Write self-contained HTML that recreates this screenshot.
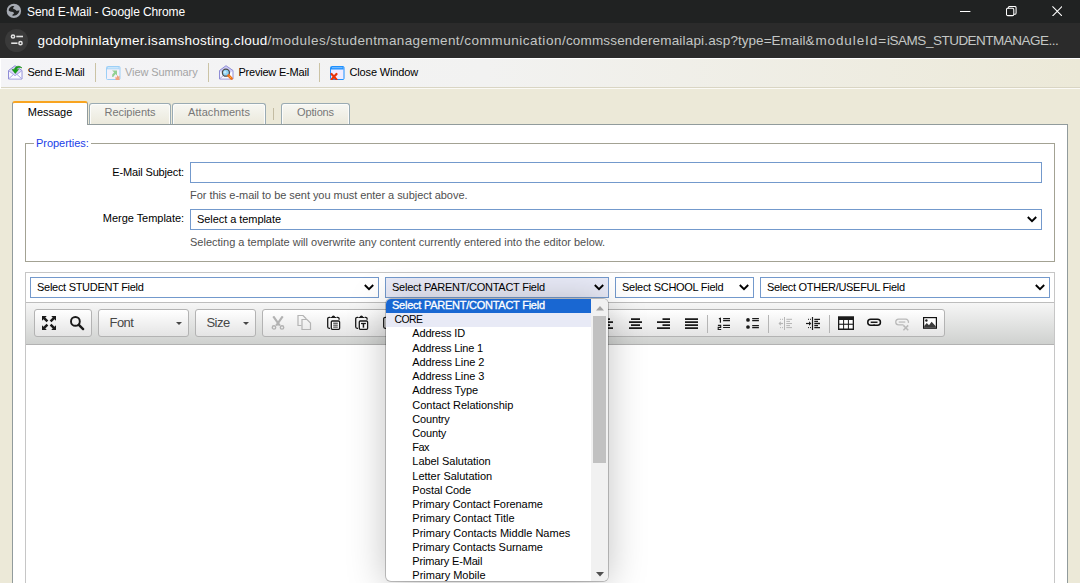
<!DOCTYPE html>
<html lang="en">
<head>
<meta charset="utf-8">
<title>Send E-Mail</title>
<style>
*{box-sizing:border-box;margin:0;padding:0}
html,body{width:1080px;height:583px;overflow:hidden;background:#ece9d8;font-family:"Liberation Sans",sans-serif;font-size:11px;color:#000}
.abs{position:absolute}
#titlebar{left:0;top:0;width:1080px;height:23px;background:#202222;color:#fff}
#titlebar .t{left:27px;top:5px;font-size:12px;letter-spacing:-.1px;white-space:nowrap}
#urlbar{left:0;top:23px;width:1080px;height:35px;background:#2b2b2b;color:#fff}
#urlbar .u{left:37.500px;top:10px;font-size:13.5px;line-height:16px;white-space:nowrap;color:#c4c7c5}
#urlbar .u b{font-weight:normal;color:#fff}
#tb{left:0;top:58px;width:1080px;height:31px;background:linear-gradient(90deg,#f4f4f7,#f2f2f1 45%,#ece9d8);box-shadow:inset 0 1px 0 #fff,inset 1px 0 0 #fff,inset 0 -1px 0 #fbfaf6,inset 0 -2px 0 #d9d5c3}
#tb .i{top:8px;font-size:11px;white-space:nowrap;letter-spacing:-.15px}
#tb .sep{top:5px;width:1px;height:19px;background:#cbc3a5}
.tab{top:103px;height:21px;border:1px solid #9aabb3;box-shadow:inset 1px 1px 0 #fcfcfa,inset -1px 0 0 #fcfcfa;border-bottom:none;border-radius:3px 3px 0 0;background:linear-gradient(#f7f7f3,#ebe9dc);color:#777;text-align:center;font-size:11px;line-height:16px;letter-spacing:-.15px}
.tab.act{top:101px;height:24px;background:#fff;color:#000;border-color:#919b9c;border-top:2px solid #f8a420;box-shadow:none;line-height:19px;z-index:3}
#panel{left:12px;top:124px;width:1056px;height:470px;background:#fff;border:1px solid #919b9c}
#fs{left:25px;top:143px;width:1030px;height:119px;border:1px solid #a3a293}
#fs .lg{left:8px;top:-8px;background:#fff;color:#1a3ee8;padding:0 2px;font-size:11px;line-height:14px;letter-spacing:-.03px}
.lbl{font-size:11px;white-space:nowrap;text-align:right;width:160px;letter-spacing:-.15px}
.hint{font-size:11px;color:#505050;white-space:nowrap}
.inp{border:1px solid #7399cc;background:#fff;height:21px}
.sel{border:1px solid #7399cc;background:#fff;height:21px;font-size:11px;line-height:19px;padding-left:6px;white-space:nowrap;letter-spacing:-.15px}
.sel svg{position:absolute;right:4px;top:6px}
#ed{left:25px;top:272px;width:1030px;height:330px;border:1px solid #c6c6c6;background:#fff}
#cktb{left:26px;top:302px;width:1028px;height:43px;background:linear-gradient(#f6f6f6,#cfd1cf);border-top:1px solid #bdbdbd;border-bottom:1px solid #b2b2b2}
.grp{top:309px;height:28px;border:1px solid #b3b3b3;border-radius:3px;background:linear-gradient(#ffffff,#e4e4e4)}
.grp .tx{position:absolute;left:10.500px;top:5px;font-size:13px;color:#474747;letter-spacing:-.55px}
#dd{left:386px;top:299px;width:222px;height:282px;background:#fff;border-radius:5px;box-shadow:0 0 0 1px rgba(0,0,0,.22),0 3px 38px rgba(0,0,0,.25);overflow:hidden;z-index:10}
#dd .o{position:absolute;left:0;width:205px;height:14.22px;line-height:13px;font-size:11px;padding-left:26.3px;white-space:nowrap}
#dd .o.h{background:#1967d2;color:#fff;padding-left:6px;letter-spacing:-.25px;height:13.6px;-webkit-text-stroke:.3px #fff}
#dd .o.g{background:#e8eaf6;padding-left:8.4px;top:13.6px!important;height:14px;line-height:13px}
#sb{left:205px;top:0;width:17px;height:282px;background:#f1f1f1}
#sb .th{left:2px;top:17px;width:13px;height:147px;background:#c1c1c1}
</style>
</head>
<body>
<div id="titlebar" class="abs">
<svg class="abs" style="left:6px;top:3px" width="16" height="16" viewBox="0 0 16 16"><circle cx="7.900" cy="7.900" r="7.200" fill="#a6abb3"/><path d="M2.700 7.600C2.600 4.900 5 2.700 8.400 2.900 7.300 3.800 7 5 7.400 6c1.500.2 2.700.9 3.300 2 .8-.5 1.800-.3 2.700-.7-.2 3.300-3.100 6-7.300 5.300.3-1.200 1.700-1.500 2-2.600-.5-1-1.800-1.300-3-1.300-1.100 0-1.900-.4-2.400-1.100z" fill="#202222"/></svg>
<div class="abs t">Send E-Mail - Google Chrome</div>
<svg class="abs" style="left:959.600px;top:6px" width="12" height="12" viewBox="0 0 12 12"><path d="M0 5.500h10.400" stroke="#fff" stroke-width="1"/></svg>
<svg class="abs" style="left:1005.500px;top:5.600px" width="11" height="11" viewBox="0 0 12 12"><rect x=".5" y="2.500" width="8" height="8" rx="1.500" fill="none" stroke="#fff" stroke-width="1.150"/><path d="M2.500 2.500v-.5a1.500 1.500 0 0 1 1.500-1.500h5.500a1.500 1.500 0 0 1 1.500 1.500v5.500a1.500 1.500 0 0 1-1.500 1.500h-1" fill="none" stroke="#fff" stroke-width="1.150"/></svg>
<svg class="abs" style="left:1051.800px;top:5.700px" width="10.600" height="10.600" viewBox="0 0 12 12"><path d="M.5.500l11 11M11.500.500l-11 11" stroke="#fff" stroke-width="1.200"/></svg>
</div>
<div id="urlbar" class="abs">
<div class="abs" style="left:5px;top:6px;width:23px;height:23px;border-radius:50%;background:#3a3a3a"></div>
<svg class="abs" style="left:10px;top:11px" width="14" height="12" viewBox="0 0 14 12"><circle cx="3" cy="2.500" r="1.600" fill="none" stroke="#e3e3e3" stroke-width="1.500"/><path d="M6.300 2.500h6.700" stroke="#e3e3e3" stroke-width="1.600"/><circle cx="10.500" cy="9.200" r="1.600" fill="none" stroke="#e3e3e3" stroke-width="1.500"/><path d="M1.200 9.200h6.300" stroke="#e3e3e3" stroke-width="1.600"/></svg>
<div class="abs u"><b style="letter-spacing:0.267px">godolphinlatymer.isamshosting.cloud</b><span style="letter-spacing:0.490px">/modules</span><span style="letter-spacing:0.386px">/studentmanagement</span><span style="letter-spacing:0.532px">/communication</span><span style="letter-spacing:0.174px">/commssenderemailapi.asp</span><span style="letter-spacing:0.030px">?type=Email</span><span style="letter-spacing:0.906px">&amp;moduleId=</span><span style="letter-spacing:-0.464px">iSAMS_</span><span style="letter-spacing:-0.520px">STUDENTMANAGE...</span></div>
</div>
<div id="tb" class="abs">

<svg class="abs" style="left:7.600px;top:7.300px" width="15" height="15" viewBox="0 0 15 15"><path d="M.5 5.500l6.500-4.800 7 4.800v8.500h-13.500z" fill="#d9d7f7" stroke="#8f8dd6" stroke-width="1"/><path d="M1.200 6.200l5.800 4.500 6.300-4.500v7.300h-12.100z" fill="#fbfbff"/><path d="M1 13.500l5-4.500M13.500 13.500l-5-4.500" stroke="#a9a7e3" stroke-width="1" fill="none"/><path d="M1 6l6 4.700 6.500-4.700" stroke="#a9a7e3" stroke-width="1" fill="none"/><path d="M14 3c-2-2.600-6.700-2.500-7.700 1.400h-2.300l3.300 4.100 3.300-4.100h-2.100c.6-1.900 3.200-2.400 5.500-1.400z" fill="#16a016" stroke="#0c7a0c" stroke-width=".5"/></svg>
<svg class="abs" style="left:106px;top:8px" width="15" height="14" viewBox="0 0 15 14"><rect x=".5" y=".5" width="13.500" height="13" rx="1" fill="#f4f1fa" stroke="#9ccff7"/><rect x="1" y="1" width="12.500" height="2.300" fill="#a9d6f8"/><path d="M2 1.800h10.500" stroke="#e6f3fd" stroke-width=".8"/><path d="M6 4.500h5v5l-1.500-1.500-2.300 3h-1v-2.500l2-2.300z" fill="#92d092"/><path d="M9.500 14v-3.500l1 1.200 1-2.700 1 1.800 1-1.300v4.500z" fill="#f2a27e"/></svg>
<svg class="abs" style="left:219px;top:7px" width="15" height="15" viewBox="0 0 15 15"><path d="M.5 5.500l6.500-4.800 7 4.800v8.500h-13.500z" fill="#cfcdf5" stroke="#8f8dd6" stroke-width="1"/><path d="M1.200 6.200l5.800 4.500 6.300-4.500v7.300h-12.100z" fill="#fbfbff"/><path d="M1 13.500l5-4.500M13.500 13.500l-5-4.500" stroke="#a9a7e3" stroke-width="1" fill="none"/><circle cx="6.900" cy="7.700" r="3.500" fill="#8fd4f5" stroke="#4c4c4c" stroke-width="1.300"/><circle cx="6" cy="7.200" r="1.300" fill="#c9ecfb"/><path d="M9.500 10.500l3 3" stroke="#f2701a" stroke-width="2.600" stroke-linecap="round"/><path d="M10.500 11.500l1.200 1.200" stroke="#ffd23c" stroke-width="1"/></svg>
<svg class="abs" style="left:330px;top:8px" width="15" height="14" viewBox="0 0 15 14"><rect x=".5" y=".5" width="13.500" height="13" rx="1" fill="#f0ecff" stroke="#1e90ff"/><rect x="1" y="1" width="12.500" height="2.500" fill="#1e90ff"/><path d="M2 1.700h10.500" stroke="#9fd0ff" stroke-width=".8"/><path d="M1.500 8l5 5.500M6.500 8l-5 5.500" stroke="#e8340a" stroke-width="2.200" stroke-linecap="round"/></svg>
<div class="abs i" style="left:27.400px;letter-spacing:-.27px">Send E-Mail</div>
<div class="abs sep" style="left:95px"></div>
<div class="abs i" style="left:125px;color:#a5a5a5;letter-spacing:-.1px">View Summary</div>
<div class="abs sep" style="left:208px"></div>
<div class="abs i" style="left:238.400px;letter-spacing:-.2px">Preview E-Mail</div>
<div class="abs sep" style="left:319px"></div>
<div class="abs i" style="left:349.500px">Close Window</div>
</div>
<div class="abs tab act" style="left:12px;width:76px;letter-spacing:-.02px">Message</div>
<div class="abs tab" style="left:89px;width:82px;letter-spacing:-.05px">Recipients</div>
<div class="abs tab" style="left:172px;width:94px;letter-spacing:.08px">Attachments</div>
<div class="abs" style="left:273px;top:108px;width:1px;height:12px;background:#c3bca2"></div>
<div class="abs tab" style="left:281px;width:69px">Options</div>
<div id="panel" class="abs"></div>
<div id="fs" class="abs"><div class="abs lg">Properties:</div></div>
<div class="abs lbl" style="left:24px;top:166px">E-Mail Subject:</div>
<div class="abs inp" style="left:190px;top:162px;width:852px"></div>
<div class="abs hint" style="left:190px;top:189px;letter-spacing:-.044px">For this e-mail to be sent you must enter a subject above.</div>
<div class="abs lbl" style="left:24px;top:212px;letter-spacing:-.04px">Merge Template:</div>
<div class="abs sel" style="left:190px;top:209px;width:852px;letter-spacing:-.06px">Select a template<svg width="10" height="7" viewBox="0 0 10 7"><path d="M.8 1l4.200 4.200 4.200-4.200" fill="none" stroke="#000" stroke-width="1.900"/></svg></div>
<div class="abs hint" style="left:190px;top:236px">Selecting a template will overwrite any content currently entered into the editor below.</div>
<div id="ed" class="abs"></div>
<div class="abs sel" style="left:30px;top:277px;width:349px;letter-spacing:-.285px">Select STUDENT Field<svg width="10" height="7" viewBox="0 0 10 7"><path d="M.8 1l4.200 4.200 4.200-4.200" fill="none" stroke="#000" stroke-width="1.900"/></svg></div>
<div class="abs sel" style="left:385px;top:277px;width:224px;background:#e9ebf8;letter-spacing:-.25px">Select PARENT/CONTACT Field<svg width="10" height="7" viewBox="0 0 10 7"><path d="M.8 1l4.200 4.200 4.200-4.200" fill="none" stroke="#000" stroke-width="1.900"/></svg></div>
<div class="abs sel" style="left:615px;top:277px;width:139px;letter-spacing:-.28px">Select SCHOOL Field<svg width="10" height="7" viewBox="0 0 10 7"><path d="M.8 1l4.200 4.200 4.200-4.200" fill="none" stroke="#000" stroke-width="1.900"/></svg></div>
<div class="abs sel" style="left:760px;top:277px;width:290px;letter-spacing:-.29px">Select OTHER/USEFUL Field<svg width="10" height="7" viewBox="0 0 10 7"><path d="M.8 1l4.200 4.200 4.200-4.200" fill="none" stroke="#000" stroke-width="1.900"/></svg></div>
<div id="cktb" class="abs"></div>
<div class="abs grp" style="left:34px;width:58px"></div>
<div class="abs grp" style="left:98px;width:91px"><span class="tx">Font</span></div>
<div class="abs grp" style="left:195px;width:61px"><span class="tx">Size</span></div>
<div class="abs grp" style="left:262px;width:683px"></div>

<!-- ck icons -->
<svg class="abs ic" style="left:42px;top:316px" width="14" height="14" viewBox="0 0 14 14"><g fill="#1a1a1a"><path d="M0 0h4.800l-1.500 1.500 3 3-1.800 1.800-3-3-1.500 1.500z"/><path d="M14 0v4.800l-1.500-1.500-3 3-1.800-1.800 3-3-1.500-1.500z"/><path d="M0 14v-4.800l1.500 1.500 3-3 1.800 1.800-3 3 1.500 1.500z"/><path d="M14 14h-4.800l1.500-1.500-3-3 1.800-1.800 3 3 1.500-1.500z"/></g></svg>
<svg class="abs ic" style="left:69px;top:315px" width="16" height="16" viewBox="0 0 16 16"><circle cx="6.400" cy="6.400" r="4.400" fill="none" stroke="#1a1a1a" stroke-width="1.900"/><path d="M9.800 9.800l4.300 4.300" stroke="#1a1a1a" stroke-width="2.400" stroke-linecap="round"/></svg>
<svg class="abs ic" style="left:176px;top:322px" width="6" height="3" viewBox="0 0 6 3"><path d="M0 0h6l-3 3z" fill="#474747"/></svg>
<svg class="abs ic" style="left:243px;top:322px" width="6" height="3" viewBox="0 0 6 3"><path d="M0 0h6l-3 3z" fill="#474747"/></svg>
<!-- cut -->
<svg class="abs ic" style="left:271px;top:316px" width="14" height="14" viewBox="0 0 14 14"><g fill="none" stroke="#b2b2b2"><path d="M2.300 .3l6.500 9.400M11.700 .3l-6.500 9.400" stroke-width="2.100"/><circle cx="3" cy="11.400" r="1.700" stroke-width="1.400"/><circle cx="11" cy="11.400" r="1.700" stroke-width="1.400"/></g></svg>
<!-- copy -->
<svg class="abs ic" style="left:297px;top:315px" width="15" height="15" viewBox="0 0 15 15"><g fill="none" stroke="#b4b4b4" stroke-width="1.200"><path d="M4.500 10.500h-3.500v-10h5l3 3v1"/><path d="M5 4.500h5l3.500 3.500v6.500h-8.500z"/></g></svg>
<!-- paste -->
<svg class="abs ic" style="left:327px;top:315px" width="14" height="15" viewBox="0 0 14 15"><g fill="none" stroke="#1a1a1a"><path d="M3 2.300h-.8a1.500 1.500 0 0 0-1.500 1.500v8a1.500 1.500 0 0 0 1.500 1.500h.8" stroke-width="1.300"/><path d="M9.800 2.300h.8a1.500 1.500 0 0 1 1.500 1.500v1" stroke-width="1.300"/><path d="M3.300 2.900v-1h1.300q.3-1.500 1.800-1.500t1.800 1.500h1.300v1z" fill="#1a1a1a" stroke="none"/><rect x="4.300" y="6" width="8.300" height="8.300" rx="1" stroke-width="1.300" fill="#fff"/><path d="M6.200 8.200h4.600M6.200 10.150h4.600M6.200 12.100h4.600" stroke-width=".95"/></g></svg>
<!-- paste text -->
<svg class="abs ic" style="left:355px;top:315px" width="14" height="15" viewBox="0 0 14 15"><g fill="none" stroke="#1a1a1a"><path d="M3 2.300h-.8a1.500 1.500 0 0 0-1.500 1.500v8a1.500 1.500 0 0 0 1.500 1.500h.8" stroke-width="1.300"/><path d="M9.800 2.300h.8a1.500 1.500 0 0 1 1.500 1.500v1" stroke-width="1.300"/><path d="M3.300 2.900v-1h1.300q.3-1.500 1.800-1.500t1.800 1.500h1.300v1z" fill="#1a1a1a" stroke="none"/><rect x="4.300" y="6" width="8.300" height="8.300" rx="1" stroke-width="1.300" fill="#fff"/><path d="M6 8.500h4.900" stroke-width="1.300"/><path d="M8.450 8.500v4.200" stroke-width="1.500"/></g></svg>
<!-- paste word (mostly hidden) -->
<svg class="abs ic" style="left:383px;top:315px" width="14" height="15" viewBox="0 0 14 15"><g fill="none" stroke="#1a1a1a"><path d="M3 2.300h-.8a1.500 1.500 0 0 0-1.500 1.500v8a1.500 1.500 0 0 0 1.500 1.500h.8" stroke-width="1.300"/></g></svg>
<!-- align left (mostly hidden) -->
<svg class="abs ic" style="left:600px;top:318px" width="13" height="12" viewBox="0 0 13 12"><path d="M0 1.100h10M0 4.100h13M0 7.100h10M0 10.100h13" stroke="#1a1a1a" stroke-width="1.600"/></svg>
<!-- center -->
<svg class="abs ic" style="left:628.500px;top:318px" width="13" height="12" viewBox="0 0 13 12"><path d="M2 1.100h9M0 4.100h13M2 7.100h9M0 10.100h13" stroke="#1a1a1a" stroke-width="1.600"/></svg>
<!-- right -->
<svg class="abs ic" style="left:656.500px;top:318px" width="13" height="12" viewBox="0 0 13 12"><path d="M5.500 1.100h7.500M0 4.100h13M5.500 7.100h7.500M0 10.100h13" stroke="#1a1a1a" stroke-width="1.600"/></svg>
<!-- justify -->
<svg class="abs ic" style="left:684.500px;top:318px" width="13" height="12" viewBox="0 0 13 12"><path d="M0 1.100h13M0 4.100h13M0 7.100h13M0 10.100h13" stroke="#1a1a1a" stroke-width="1.600"/></svg>
<div class="abs" style="left:707px;top:315px;width:1px;height:18px;background:#b5b5b5"></div>
<!-- numbered list -->
<svg class="abs ic" style="left:717px;top:317px" width="14" height="14" viewBox="0 0 14 14"><g fill="none" stroke="#1a1a1a"><path d="M6.100 1.600h6.900M6.100 3.700h6.900M6.100 8.400h6.900M6.100 10.500h6.900" stroke-width="1.200"/><path d="M1.900 1.900l1.500-.6v4.500" stroke-width="1.200"/><path d="M.9 8.400h2.800v2h-2.500v2.100h3" stroke-width="1.100"/></g></svg>
<!-- bullet list -->
<svg class="abs ic" style="left:745px;top:317px" width="14" height="14" viewBox="0 0 14 14"><g fill="#1a1a1a"><circle cx="3" cy="2.900" r="1.850"/><circle cx="3" cy="10" r="1.850"/></g><path d="M7.200 1.600h6.700M7.200 3.700h6.700M7.200 8.600h6.700M7.200 10.600h6.700" stroke="#1a1a1a" stroke-width="1.200"/></svg>
<div class="abs" style="left:768px;top:315px;width:1px;height:18px;background:#b5b5b5"></div>
<!-- outdent (disabled) -->
<svg class="abs ic" style="left:778px;top:317px" width="14" height="13" viewBox="0 0 14 13"><g stroke="#b6b6b6" fill="none"><path d="M6.500 0v13" stroke-width="1"/><path d="M8.300 2.300h5.700M8.300 4.400h3.700M8.300 6.500h5.700M8.300 8.600h3.700M8.300 10.600h5.700" stroke-width="1"/><path d="M1 6.500h4" stroke-width="1.200"/><path d="M2.800 4.300l-2.300 2.200 2.300 2.200z" fill="#b6b6b6" stroke="none"/><path d="M2 2.300h1M4 2.300h1M2 10.600h1M4 10.600h1" stroke-width="1"/></g></svg>
<!-- indent -->
<svg class="abs ic" style="left:806px;top:317px" width="14" height="13" viewBox="0 0 14 13"><g stroke="#1a1a1a" fill="none"><path d="M6.500 0v13" stroke-width="1.200"/><path d="M8.300 2.300h5.700M8.300 4.400h3.700M8.300 6.500h5.700M8.300 8.600h3.700M8.300 10.600h5.700" stroke-width="1.300"/><path d="M0 6.500h4" stroke-width="1.200"/><path d="M3 4.300l2.300 2.200-2.300 2.200z" fill="#1a1a1a" stroke="none"/><path d="M2 2.300h1M4 2.300h1M2 10.600h1M4 10.600h1" stroke-width="1"/></g></svg>
<div class="abs" style="left:829px;top:315px;width:1px;height:18px;background:#b5b5b5"></div>
<!-- table -->
<svg class="abs ic" style="left:838px;top:316px" width="16" height="14" viewBox="0 0 16 14"><rect x="0" y="0" width="16" height="14" fill="#1a1a1a"/><g fill="#fff"><rect x="1.300" y="4" width="3.800" height="3.700"/><rect x="6.100" y="4" width="3.800" height="3.700"/><rect x="10.900" y="4" width="3.800" height="3.700"/><rect x="1.300" y="8.800" width="3.800" height="3.700"/><rect x="6.100" y="8.800" width="3.800" height="3.700"/><rect x="10.900" y="8.800" width="3.800" height="3.700"/></g><rect x="0" y="0" width="16" height="1" fill="#555"/></svg>
<!-- link -->
<svg class="abs ic" style="left:866.800px;top:318px" width="15" height="9" viewBox="0 0 15 9"><g fill="none" stroke="#111"><rect x=".75" y="1.250" width="12.700" height="6" rx="3" stroke-width="1.500"/><path d="M3.700 4.250h6.800" stroke-width="1.400"/><path d="M7.100 .9v1M7.100 6.600v1" stroke-width="1.600"/></g></svg>
<!-- unlink (disabled) -->
<svg class="abs ic" style="left:895px;top:318px" width="15" height="13" viewBox="0 0 15 13"><g fill="none" stroke="#b9b9b9" stroke-width="1.300"><path d="M8.500 6.900h-4.900a2.850 2.850 0 0 1 0-5.700h7a2.850 2.850 0 0 1 2.800 3.600"/><path d="M3.700 4.050h6.600" stroke-width="1.200"/><path d="M8.400 7.400l4.800 4.800M13.200 7.400l-4.800 4.800" stroke-width="1.500"/></g></svg>
<!-- image -->
<svg class="abs ic" style="left:923px;top:317px" width="14" height="12" viewBox="0 0 14 12"><rect x=".6" y=".6" width="12.800" height="10.600" fill="#fff" stroke="#111" stroke-width="1.200"/><path d="M1.200 10.700v-1.700l2.600-3 2.200 2.300 2.600-3.500 4.200 4.400v1.500z" fill="#3c3c3c"/><circle cx="3.400" cy="3.500" r="1.200" fill="#222"/></svg>
<div id="dd" class="abs">
<div class="o h" style="top:0">Select PARENT/CONTACT Field</div>
<div class="o g" style="font-size:10.400px;letter-spacing:-.5px">CORE</div>
<div class="o" style="top:28.44px;letter-spacing:-0.172px">Address ID</div>
<div class="o" style="top:42.66px;letter-spacing:-0.192px">Address Line 1</div>
<div class="o" style="top:56.88px;letter-spacing:-0.106px">Address Line 2</div>
<div class="o" style="top:71.10px;letter-spacing:-0.106px">Address Line 3</div>
<div class="o" style="top:85.32px;letter-spacing:-0.114px">Address Type</div>
<div class="o" style="top:99.54px;letter-spacing:-0.026px">Contact Relationship</div>
<div class="o" style="top:113.76px;letter-spacing:-0.162px">Country</div>
<div class="o" style="top:127.98px;letter-spacing:-0.177px">County</div>
<div class="o" style="top:142.20px;letter-spacing:-0.581px">Fax</div>
<div class="o" style="top:156.42px;letter-spacing:-0.038px">Label Salutation</div>
<div class="o" style="top:170.64px;letter-spacing:-0.013px">Letter Salutation</div>
<div class="o" style="top:184.86px;letter-spacing:-0.103px">Postal Code</div>
<div class="o" style="top:199.08px;letter-spacing:-0.064px">Primary Contact Forename</div>
<div class="o" style="top:213.30px;letter-spacing:0.015px">Primary Contact Title</div>
<div class="o" style="top:227.52px;letter-spacing:0.010px">Primary Contacts Middle Names</div>
<div class="o" style="top:241.74px;letter-spacing:-0.064px">Primary Contacts Surname</div>
<div class="o" style="top:255.96px;letter-spacing:-0.159px">Primary E-Mail</div>
<div class="o" style="top:270.18px;letter-spacing:-0.004px">Primary Mobile</div>
<div id="sb" class="abs"><div class="abs th"></div><svg class="abs" style="left:4.500px;top:6.500px" width="8" height="5" viewBox="0 0 8 5"><path d="M0 4.500l4-4.500 4 4.500z" fill="#a3a3a3"/></svg><svg class="abs" style="left:4.500px;top:273px" width="8" height="5" viewBox="0 0 8 5"><path d="M0 0h8l-4 4.500z" fill="#505050"/></svg></div>
</div>
</body>
</html>
